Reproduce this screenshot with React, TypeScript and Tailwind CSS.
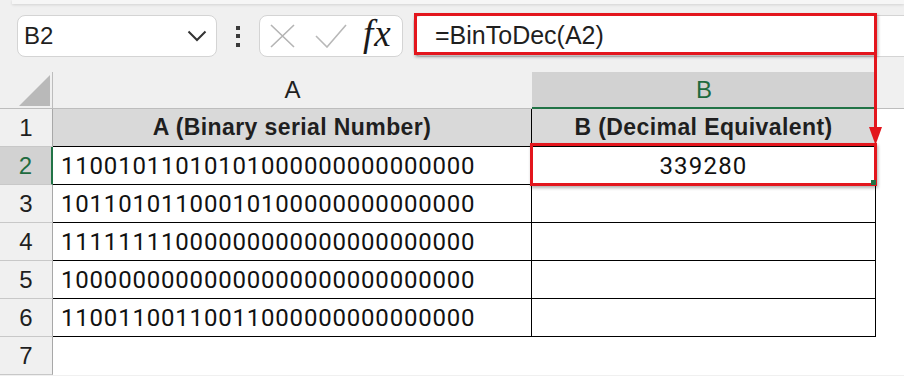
import React from "react";

const rows = [
  "11001011010101000000000000000",
  "10110101100010100000000000000",
  "11111111000000000000000000000",
  "10000000000000000000000000000",
  "11001100110011000000000000000",
];

export default function App() {
  return (
    <div className="relative w-[904px] h-[376px] overflow-hidden bg-[#f0f0f0] font-['Liberation_Sans',Arial,sans-serif] text-[#1f1f1f]">
      <div className="ml-[12px] h-[4px] bg-[#f6f6f6] shadow-[0_1px_3px_rgba(0,0,0,0.12)]" />

      {/* formula bar */}
      <div className="mt-[11px] flex h-[42px]">
        <div className="ml-[17px] flex w-[200px] items-center justify-between rounded-[8px] border border-[#d4d4d4] bg-white pl-[6px] pr-[9px] text-[24px]">
          <span>B2</span>
          <svg width="20" height="12" viewBox="0 0 20 12" fill="none">
            <path d="M1.5 1.5 L10 10 L18.5 1.5" stroke="#333" strokeWidth="2" />
          </svg>
        </div>
        <div className="flex w-[42px] flex-col items-center justify-center gap-[4.5px]">
          <div className="h-[4px] w-[4px] bg-[#3a3a3a]" />
          <div className="h-[4px] w-[4px] bg-[#3a3a3a]" />
          <div className="h-[4px] w-[4px] bg-[#3a3a3a]" />
        </div>
        <div className="flex w-[144px] items-center rounded-[8px] border border-[#d4d4d4] bg-white pl-[10px]">
          <svg width="25" height="24" viewBox="0 0 25 24" fill="none">
            <path d="M1 1 L24 23 M24 1 L1 23" stroke="#b4b4b4" strokeWidth="1.6" />
          </svg>
          <svg className="ml-[20px]" width="32" height="24" viewBox="0 0 32 24" fill="none">
            <path d="M1 12 L12 23 L31 1" stroke="#b8b8b8" strokeWidth="1.6" />
          </svg>
          <span className="ml-[16px] mt-[-5px] font-['Liberation_Serif',serif] text-[37px] italic leading-none tracking-[1px] text-[#1a1a1a]">
            fx
          </span>
        </div>
        <div className="ml-[10px] flex flex-1 items-center rounded-l-[8px] border border-r-0 border-[#d4d4d4] bg-white pl-[21px] text-[25px]">
          =BinToDec(A2)
        </div>
      </div>

      <div className="h-[15px]" />

      {/* sheet */}
      <div className="grid grid-cols-[53px_479px_344px_1fr] text-[24px]">
        <div className="flex h-[37px] items-end justify-end border-r border-b border-[#bdbdbd] pb-[2px] pr-[2px]">
          <svg width="31" height="31" viewBox="0 0 31 31">
            <polygon points="0,31 31,31 31,0" fill="#b9b9b9" />
          </svg>
        </div>
        <div className="flex h-[37px] items-center justify-center border-b border-[#bdbdbd]">A</div>
        <div className="flex h-[37px] items-center justify-center border-b-2 border-[#217346] bg-[#d2d2d2] text-[#1e6b3f]">
          B
        </div>
        <div className="h-[37px] border-b border-[#bdbdbd]" />

        {/* row 1 */}
        <div className="flex h-[38px] items-center justify-center border-r border-b border-r-[#a8a8a8] border-b-[#c8c8c8]">1</div>
        <div className="flex h-[38px] items-center justify-center border-r border-b border-black bg-[#d9d9d9] text-[23px] font-bold tracking-[0.4px]">
          A (Binary serial Number)
        </div>
        <div className="flex h-[38px] items-center justify-center border-r border-b border-black bg-[#d9d9d9] text-[23px] font-bold tracking-[0.4px]">
          B (Decimal Equivalent)
        </div>
        <div className="h-[38px] bg-white" />

        {rows.map((bin, i) => {
          const active = i === 0;
          return (
            <React.Fragment key={bin}>
              <div
                className={
                  active
                    ? "flex h-[38px] items-center justify-center border-r-2 border-b border-r-[#217346] border-b-[#c8c8c8] bg-[#d2d2d2] text-[#1e6b3f]"
                    : "flex h-[38px] items-center justify-center border-r border-b border-r-[#a8a8a8] border-b-[#c8c8c8]"
                }
              >
                {i + 2}
              </div>
              <div className="flex h-[38px] items-center border-r border-b border-black bg-white pl-[8px] font-['Roboto',sans-serif] tabular-nums tracking-[0.8px] text-[#111]">
                {bin}
              </div>
              <div className="flex h-[38px] items-center justify-center border-r border-b border-black bg-white font-['Roboto',sans-serif] tabular-nums tracking-[1.2px] text-[#111]">
                {active ? "339280" : ""}
              </div>
              <div className="h-[38px] bg-white" />
            </React.Fragment>
          );
        })}

        {/* row 7 */}
        <div className="flex h-[38px] items-center justify-center border-r border-b border-r-[#a8a8a8] border-b-[#c8c8c8]">7</div>
        <div className="h-[38px] bg-white" />
        <div className="h-[38px] bg-white" />
        <div className="h-[38px] bg-white" />
      </div>

      {/* annotations */}
      <div className="absolute left-[414px] top-[13px] h-[42px] w-[463px] border-[3px] border-[#e3161d] shadow-[1px_2px_3px_rgba(0,0,0,0.3)]" />
      <div className="absolute left-[874px] top-[55px] h-[75px] w-[3px] bg-[#e3161d]" />
      <svg className="absolute left-[869px] top-[127px]" width="13" height="18" viewBox="0 0 13 18">
        <polygon points="0,0 13,0 6.5,18" fill="#e3161d" />
      </svg>
      <div className="absolute left-[530px] top-[143px] h-[43px] w-[347px] border-[3px] border-[#e3161d] shadow-[1px_2px_3px_rgba(0,0,0,0.3)]" />
      <div className="absolute left-[871px] top-[180px] h-[5px] w-[5px] bg-[#217346]" />
    </div>
  );
}
